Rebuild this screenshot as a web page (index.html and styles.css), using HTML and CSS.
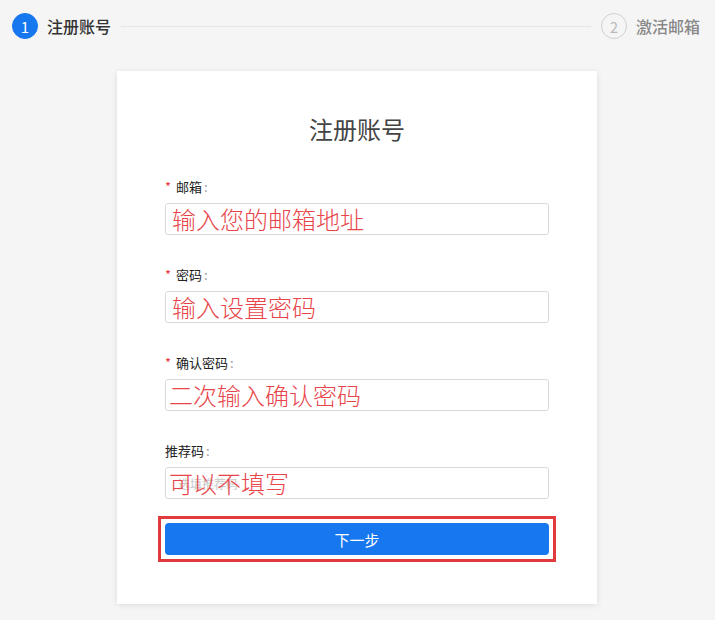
FILE: index.html
```html
<!DOCTYPE html>
<html lang="zh-CN">
<head>
<meta charset="utf-8">
<title>注册账号</title>
<link rel="stylesheet" href="styles.css">
</head>
<body>
<div class="steps">
  <div class="step active">
    <span class="step-num">1</span>
    <span class="step-title">注册账号</span>
  </div>
  <div class="step-line"></div>
  <div class="step">
    <span class="step-num">2</span>
    <span class="step-title">激活邮箱</span>
  </div>
</div>

<div class="card">
  <h1 class="card-title">注册账号</h1>
  <form class="form">
    <div class="field">
      <label class="label"><span class="req">*</span>邮箱<span class="colon">:</span></label>
      <div class="input">
        <span class="note note-a">输入您的邮箱地址</span>
      </div>
    </div>
    <div class="field">
      <label class="label"><span class="req">*</span>密码<span class="colon">:</span></label>
      <div class="input">
        <span class="note note-a">输入设置密码</span>
      </div>
    </div>
    <div class="field">
      <label class="label"><span class="req">*</span>确认密码<span class="colon">:</span></label>
      <div class="input">
        <span class="note note-b">二次输入确认密码</span>
      </div>
    </div>
    <div class="field">
      <label class="label">推荐码<span class="colon">:</span></label>
      <div class="input">
        <span class="placeholder">选填推荐码</span>
        <span class="note note-b">可以不填写</span>
      </div>
    </div>
    <div class="highlight">
      <button type="button" class="btn">下一步</button>
    </div>
  </form>
</div>
</body>
</html>
```

FILE: styles.css
```css
* { box-sizing: border-box; }

html, body {
  margin: 0;
  padding: 0;
}

body {
  background: #f5f5f5;
  font-family: "Noto Sans CJK SC", "Noto Sans", sans-serif;
  color: #333;
  width: 715px;
  height: 620px;
  overflow: hidden;
}

.steps {
  display: flex;
  align-items: center;
  padding: 13px 15px 0 12px;
  height: 39px;
}

.step {
  display: flex;
  align-items: center;
}

.step-num {
  width: 26px;
  height: 26px;
  border-radius: 50%;
  border: 1px solid #d0d0d0;
  color: #bbb;
  font-size: 15px;
  display: flex;
  align-items: center;
  justify-content: center;
  margin-right: 9px;
  line-height: 1;
}

.step-title {
  font-size: 16px;
  color: #888;
  font-weight: 500;
  line-height: 26px;
}

.step.active .step-num {
  background: #1677ef;
  border-color: #1677ef;
  color: #fff;
}

.step.active .step-title {
  color: #333;
}

.step-line {
  flex: 1;
  height: 1px;
  background: #e6e6e6;
  margin: 0 10px 0 10px;
}

.card {
  width: 480px;
  height: 533px;
  margin: 32px 0 0 117px;
  background: #fff;
  box-shadow: 0 1px 6px rgba(0, 0, 0, 0.1);
  padding: 41px 48px 0;
}

.card-title {
  margin: 0;
  text-align: center;
  font-size: 24px;
  font-weight: 400;
  line-height: 34px;
  color: #444;
}

.form {
  margin-top: 31px;
  display: flex;
  flex-direction: column;
}

.field {
  display: flex;
  flex-direction: column;
  margin-bottom: 30px;
}

.field:nth-child(4) {
  margin-bottom: 17px;
}

.label {
  font-size: 13px;
  line-height: 20px;
  color: #222;
  margin-bottom: 6px;
}

.req {
  color: #e5403a;
  margin-right: 5px;
}

.colon {
  color: #999;
  margin-left: 2px;
}

.input {
  position: relative;
  height: 32px;
  border: 1px solid #d9d9d9;
  border-radius: 3px;
  background: #fff;
  display: flex;
  align-items: center;
  padding-left: 12px;
}

.placeholder {
  font-size: 12px;
  color: #c8c8c8;
}

.note {
  position: absolute;
  top: 2px;
  font-size: 24px;
  line-height: 26px;
  color: #e8454a;
  white-space: nowrap;
  font-weight: 300;
}

.note-a { left: 6px; }
.note-b { left: 3px; }

.highlight {
  margin: 0 -7px;
  padding: 4px;
  border: 3px solid #e0393e;
}

.btn {
  display: block;
  width: 100%;
  height: 32px;
  border: 0;
  border-radius: 4px;
  background: #1677ef;
  color: #fff;
  font-family: "Noto Sans CJK SC", "Noto Sans", sans-serif;
  font-size: 15px;
  cursor: pointer;
}
```
